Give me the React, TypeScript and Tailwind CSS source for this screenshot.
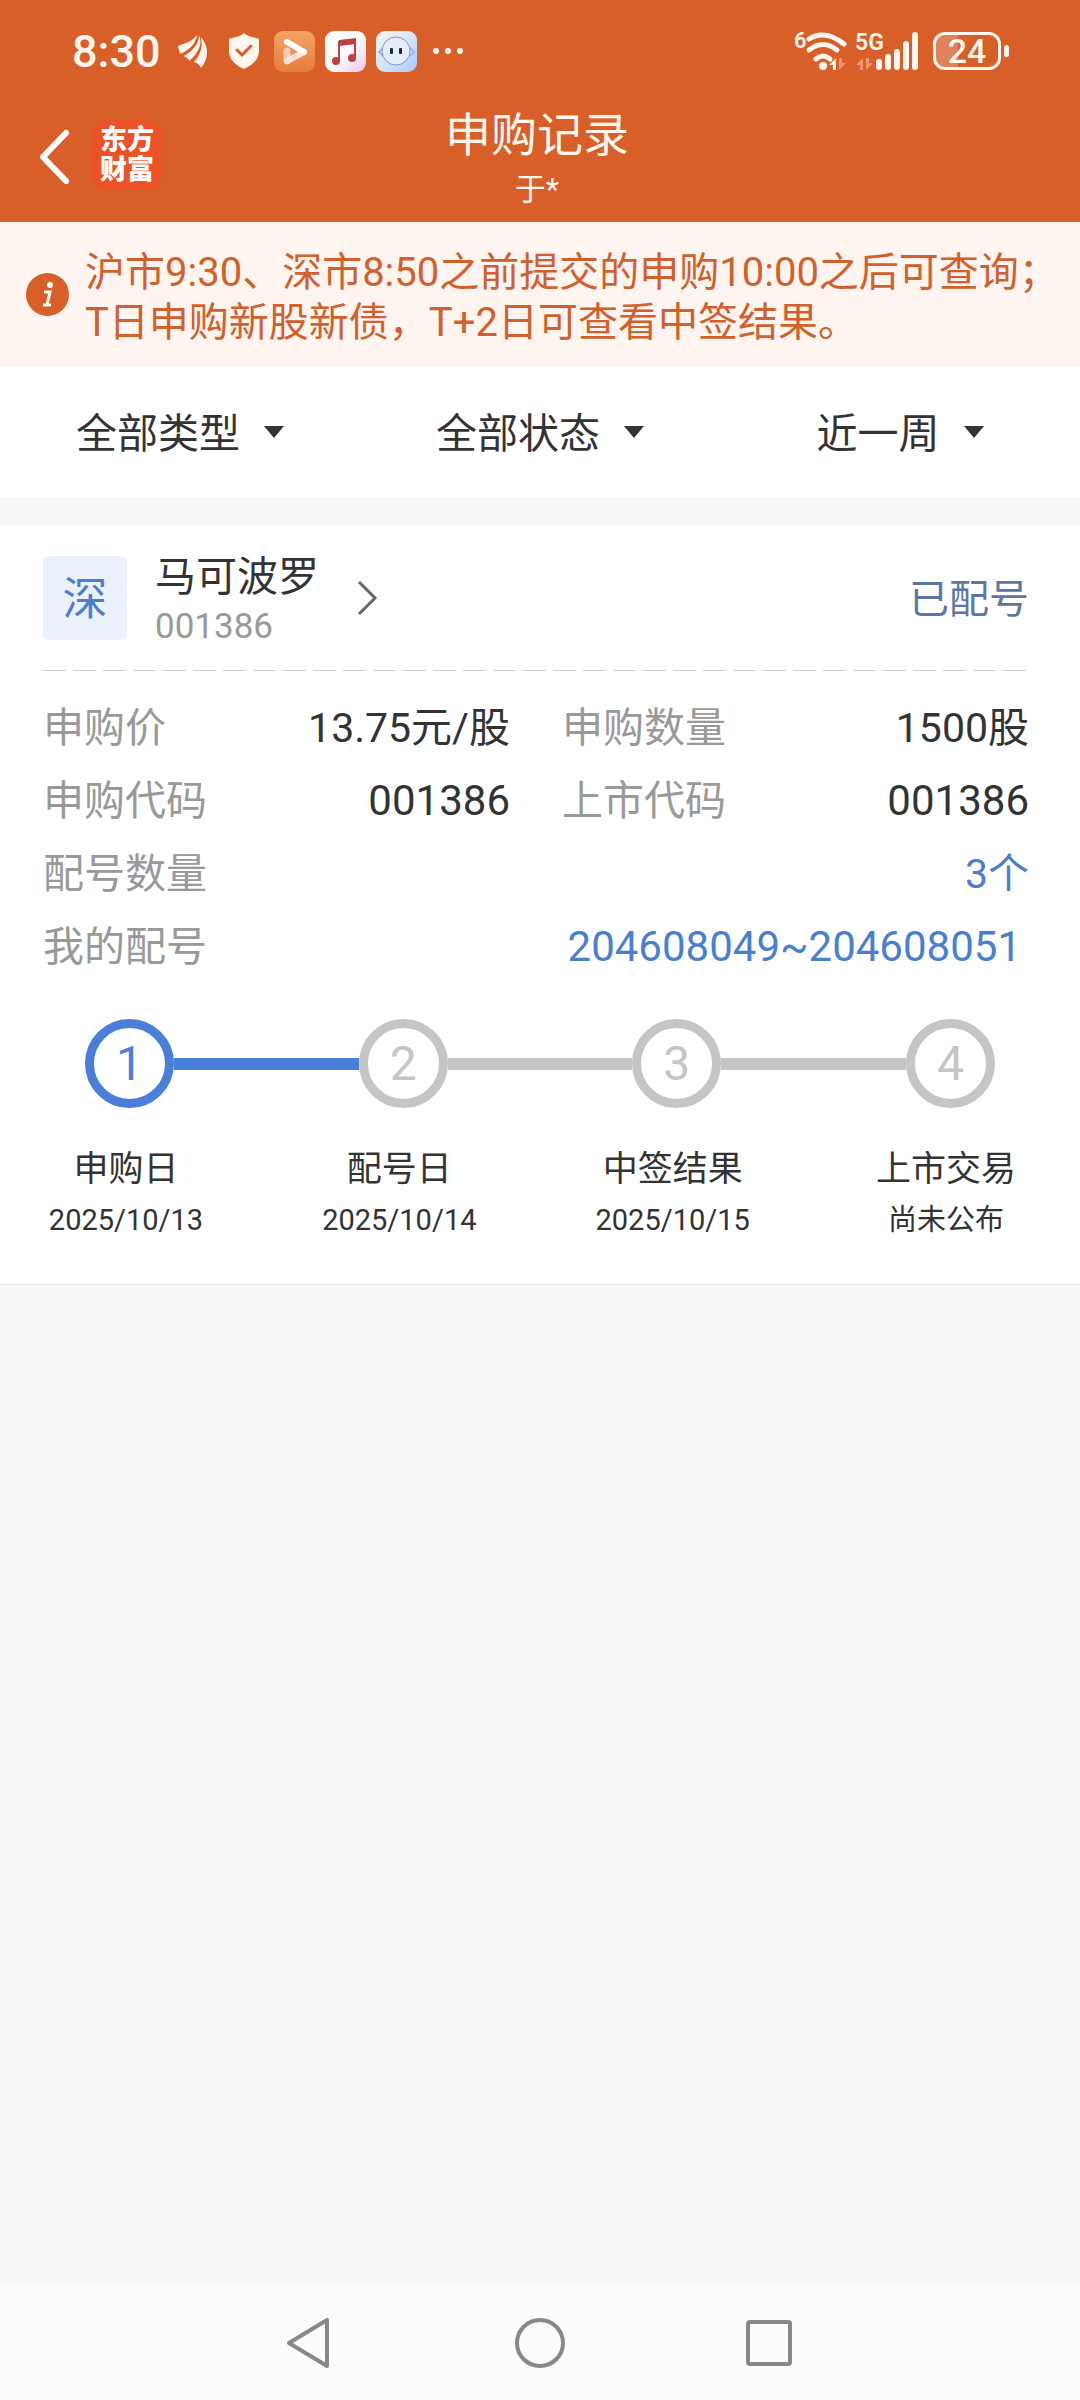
import React, { useState } from 'react';

const steps = [
  { no: 1, label: '申购日', date: '2025/10/13', active: true },
  { no: 2, label: '配号日', date: '2025/10/14', active: false },
  { no: 3, label: '中签结果', date: '2025/10/15', active: false },
  { no: 4, label: '上市交易', date: '尚未公布', active: false },
];

function StatusBar() {
  return (
    <div className="flex h-[102px] items-center justify-between pl-[72px] pr-[71px]">
      <div className="flex items-center">
        <span className="w-[106px] pt-[2px] text-[45px] leading-[46px] font-medium">8:30</span>
        <svg className="w-[30px] h-[34px]" viewBox="0 0 30 34" fill="currentColor">
          <path d="M0 12C7 9 14 8 19 1C18 10 10 17 2 20C2 17 0 15 0 12Z" />
          <path d="M6 22C13 18 21 11 21 1C25 10 20 20 11 27C11 24 8 24 6 22Z" />
          <path d="M23 3C32 14 30 26 23 34C22 31 20 29 16 28C22 22 25 13 23 3Z" />
        </svg>
        <svg className="ml-5 w-8 h-[38px]" viewBox="0 0 32 38" fill="none">
          <path d="M16 1C20 5 26 5 31 7V19C31 27 25 33 16 37C7 33 1 27 1 19V7C6 5 12 5 16 1Z" fill="#fff6f0" />
          <path d="M9 18L14 23L23 14" stroke="#d85f27" strokeWidth="3" strokeLinecap="round" strokeLinejoin="round" />
        </svg>
        <svg className="ml-[14px] w-[41px] h-[41px]" viewBox="0 0 41 41" fill="none">
          <defs>
            <linearGradient id="play" x1="0" y1="0" x2="0" y2="1">
              <stop stopColor="#f4a266" />
              <stop offset="1" stopColor="#e77d3b" />
            </linearGradient>
          </defs>
          <rect width="41" height="41" rx="9" fill="url(#play)" />
          <path d="M13 20V30" stroke="#f8cdb0" strokeWidth="7" strokeLinecap="round" />
          <path d="M13 30L30 21" stroke="#fbe3d3" strokeWidth="6" strokeLinecap="round" />
          <path d="M13 11L30 21" stroke="#fff" strokeWidth="6" strokeLinecap="round" />
        </svg>
        <svg className="ml-[10px] w-[41px] h-[41px]" viewBox="0 0 41 41" fill="none">
          <defs>
            <linearGradient id="music" x1="0" y1="0" x2="1" y2="1">
              <stop offset="0.5" stopColor="#fff" />
              <stop offset="1" stopColor="#ecc6ef" />
            </linearGradient>
          </defs>
          <rect width="41" height="41" rx="9" fill="url(#music)" />
          <ellipse cx="11" cy="30" rx="4" ry="4" fill="#bf403c" />
          <ellipse cx="27" cy="27" rx="4" ry="4" fill="#bf403c" />
          <path d="M14 30V11L30 9V27" stroke="#bf403c" strokeWidth="2" />
          <path d="M14 9L31 7V13L14 15Z" fill="#bf403c" />
        </svg>
        <svg className="ml-[10px] w-[41px] h-[41px]" viewBox="0 0 41 41" fill="none">
          <defs>
            <linearGradient id="bot" x1="0" y1="0" x2="1" y2="1">
              <stop stopColor="#fbf3ea" />
              <stop offset="0.45" stopColor="#d8e8fa" />
              <stop offset="1" stopColor="#a9c8fa" />
            </linearGradient>
          </defs>
          <rect width="41" height="41" rx="9" fill="url(#bot)" />
          <path d="M7 17L3 21L7 25M34 17L38 21L34 25" stroke="#9db7ee" strokeWidth="2" />
          <circle cx="20" cy="20" r="14" fill="#e3eefc" stroke="#7f95dc" strokeWidth="1" />
          <rect x="14" y="17" width="3" height="6" rx="1" fill="#26263c" />
          <rect x="23" y="17" width="3" height="6" rx="1" fill="#26263c" />
        </svg>
        <svg className="ml-4 w-[30px] h-2" viewBox="0 0 30 8" fill="currentColor">
          <circle cx="3" cy="4" r="3" />
          <circle cx="15" cy="4" r="3" />
          <circle cx="27" cy="4" r="3" />
        </svg>
      </div>

      <div className="flex items-center">
        <svg className="w-[56px] h-14" viewBox="-4 -8 56 56" fill="none">
          <text x="-1" y="17" fontSize="22" fontWeight="600" fill="#fff6f0">6</text>
          <path d="M14 8Q30 -2 49 13" stroke="#fff6f0" strokeWidth="5" strokeLinecap="round" />
          <path d="M14 19Q28 8 42 19" stroke="#fff6f0" strokeWidth="5" strokeLinecap="round" />
          <path d="M21 28Q28 22 35 28" stroke="#fff6f0" strokeWidth="5" strokeLinecap="round" />
          <circle cx="28" cy="35" r="4" fill="#fff6f0" />
          <path d="M34 34L41 27V39H38V34Z" fill="#fff6f0" />
          <path d="M44 27V39L51 32H47V27Z" fill="#ef976c" />
        </svg>
        <svg className="ml-2 w-[64px] h-14" viewBox="0 -8 64 56" fill="none">
          <text x="0" y="19" fontSize="23" fontWeight="600" fill="#fff6f0">5G</text>
          <path d="M1 34L8 27V39H5V34Z" fill="#ef976c" />
          <path d="M11 27V39L18 32H14V27Z" fill="#ef976c" />
          <path d="M24 31V36M33 26V36M42 21V36M51 13V36M60 4V36" stroke="#fff6f0" strokeWidth="6" strokeLinecap="round" />
        </svg>
        <div className="ml-[14px] flex items-center gap-[3px]">
          <div className="flex h-[38px] w-[68px] items-center justify-center rounded-xl border-[3px] border-[#fff6f0] bg-linear-to-r from-[#e0835a] from-35% to-transparent to-35% text-[34px] leading-[34px] font-medium">
            24
          </div>
          <div className="h-3 w-[5px] rounded-full bg-[#fff6f0]" />
        </div>
      </div>
    </div>
  );
}

function Header() {
  return (
    <header className="bg-[#d85f27] text-[#fff6f0]">
      <StatusBar />
      <div className="grid h-[120px] grid-cols-[1fr_auto_1fr] items-start">
        <div className="flex items-center pt-[18px] pl-9">
          <button aria-label="返回" className="h-[70px] w-[38px]">
            <svg className="w-[38px] h-[70px]" viewBox="0 0 38 70" fill="none">
              <path d="M30 13L7 37L30 61" stroke="#fff" strokeWidth="6" strokeLinecap="round" strokeLinejoin="round" />
            </svg>
          </button>
          <div className="ml-[18px] flex size-[70px] flex-col items-center justify-center rounded-2xl bg-[#eb5228] text-[27px] leading-[30px] font-black text-white">
            <span>东方</span>
            <span>财富</span>
          </div>
        </div>
        <div className="flex flex-col items-center pr-1.5">
          <h1 className="text-[46px] leading-[66px]">申购记录</h1>
          <p className="text-[31px] leading-[44px]">于*</p>
        </div>
      </div>
    </header>
  );
}

function Notice() {
  return (
    <div className="flex h-[145px] items-center bg-[#fef4f0] pl-[26px] text-[#d0602c]">
      <svg className="w-[43px] h-[43px] shrink-0" viewBox="0 0 43 43" fill="none">
        <circle cx="21.5" cy="21.5" r="21.5" fill="#d85f27" />
        <circle cx="24" cy="12" r="3" fill="#fff" />
        <path d="M18 19H24L21 32M17 32H25" stroke="#fff" strokeWidth="3" />
      </svg>
      <p className="ml-4 pt-1.5 text-[40px] leading-[50px] whitespace-nowrap">
        沪市9:30、深市8:50之前提交的申购10:00之后可查询；
        <br />
        T日申购新股新债，T+2日可查看中签结果。
      </p>
    </div>
  );
}

function Filter({ label, options }: { label: string; options: string[] }) {
  const [value, setValue] = useState(options[0]);

  return (
    <label className="relative flex items-center justify-self-center">
      <select
        aria-label={label}
        value={value}
        onChange={(e) => setValue(e.target.value)}
        className="field-sizing-content appearance-none bg-transparent pt-[3px] pr-11 text-[41px] leading-[60px] focus:outline-none"
      >
        {options.map((o) => (
          <option key={o}>{o}</option>
        ))}
      </select>
      <svg className="pointer-events-none absolute right-0 w-5 h-3" viewBox="0 0 20 12" fill="#333">
        <path d="M0 0H20L10 12Z" />
      </svg>
    </label>
  );
}

function Row({ label, children }: { label: string; children: React.ReactNode }) {
  return (
    <div className="flex h-[73px] items-center justify-between">
      <dt className="text-[#999]">{label}</dt>
      <dd>{children}</dd>
    </div>
  );
}

function Num({ children }: { children: React.ReactNode }) {
  return <span className="text-[42px]">{children}</span>;
}

function RecordCard() {
  return (
    <section className="border-b border-[#e8eaea] bg-white pb-10">
      <div className="pl-[43px] pr-[51px]">
        <div className="flex h-36 items-center">
          <div className="flex size-[84px] items-center justify-center rounded-md bg-[#eaf1fb] pt-1 text-[45px] leading-[60px] text-[#4a7fcf]">
            深
          </div>
          <div className="ml-7 pt-1.5">
            <h2 className="text-[41px] leading-[52px]">马可波罗</h2>
            <p className="text-[35px] leading-[48px] text-[#999]">001386</p>
          </div>
          <button aria-label="查看详情" className="ml-9">
            <svg className="w-6 h-9" viewBox="0 0 24 36" fill="none">
              <path d="M4 2L20 18L4 34" stroke="#666" strokeWidth="3" />
            </svg>
          </button>
          <span className="ml-auto pt-[3px] text-[40px] leading-[60px] text-[#5b76a4]">已配号</span>
        </div>

        <svg className="block w-full h-px" fill="none">
          <line x1="0" y1="0.5" x2="100%" y2="0.5" stroke="#ccc" strokeDasharray="23 7" />
        </svg>

        <dl className="mt-5 grid grid-cols-2 gap-x-[52px] text-[41px] leading-[60px]">
          <Row label="申购价">13.75元/股</Row>
          <Row label="申购数量">1500股</Row>
          <Row label="申购代码">
            <Num>001386</Num>
          </Row>
          <Row label="上市代码">
            <Num>001386</Num>
          </Row>
          <div className="col-span-2 text-[#4a7fcf]">
            <Row label="配号数量">3个</Row>
          </div>
          <div className="col-span-2 text-[#4a7fcf]">
            <Row label="我的配号">
              <a href="#numbers" className="pr-2">
                <Num>204608049~204608051</Num>
              </a>
            </Row>
          </div>
        </dl>
      </div>

      <div className="mt-9 flex items-center px-[85px]">
        {steps.map((s, i) => (
          <React.Fragment key={s.no}>
            {i > 0 && (
              <div className={`h-3 flex-1 ${steps[i - 1].active ? 'bg-[#4a7fd9]' : 'bg-[#c5c5c5]'}`} />
            )}
            <div
              className={`flex size-[89px] items-center justify-center rounded-full border-[9px] text-[48px] leading-[60px] ${
                s.active ? 'border-[#4a7fd9] text-[#4a7fd9]' : 'border-[#c5c5c5] text-[#c5c5c5]'
              }`}
            >
              {s.no}
            </div>
          </React.Fragment>
        ))}
      </div>
      <ol className="mt-9 flex justify-between pl-[46px] pr-[54px] text-center">
        {steps.map((s) => (
          <li key={s.no} className="w-40">
            <p className="text-[35px] leading-[52px]">{s.label}</p>
            <p className="text-[29px] leading-[48px]">{s.date}</p>
          </li>
        ))}
      </ol>
    </section>
  );
}

function NavBar() {
  return (
    <nav className="flex h-[114px] items-center justify-center gap-[180px] bg-[#fcfcfc]">
      <button aria-label="返回">
        <svg className="w-[50px] h-[50px]" viewBox="0 0 50 50" fill="none" stroke="#888" strokeWidth="4" strokeLinejoin="round">
          <path d="M42 2V48L4 25Z" />
        </svg>
      </button>
      <button aria-label="主页">
        <svg className="w-[50px] h-[50px]" viewBox="0 0 50 50" fill="none" stroke="#888" strokeWidth="4">
          <circle cx="25" cy="25" r="23" />
        </svg>
      </button>
      <button aria-label="最近任务">
        <svg className="w-[50px] h-[50px]" viewBox="0 0 50 50" fill="none" stroke="#888" strokeWidth="4">
          <rect x="3" y="4" width="42" height="42" rx="2" />
        </svg>
      </button>
    </nav>
  );
}

export default function App() {
  return (
    <div className="flex min-h-screen flex-col bg-[#f7f8fa] font-[Roboto,'Noto_Sans_CJK_SC',sans-serif] text-[#333]">
      <Header />
      <Notice />
      <div className="grid h-[130px] grid-cols-3 items-center bg-white">
        <Filter label="类型" options={['全部类型', '新股', '新债']} />
        <Filter label="状态" options={['全部状态', '已配号', '已中签', '未中签']} />
        <Filter label="时间" options={['近一周', '近一月', '近三月']} />
      </div>
      <main className="mt-[29px] flex-1">
        <RecordCard />
      </main>
      <NavBar />
    </div>
  );
}
